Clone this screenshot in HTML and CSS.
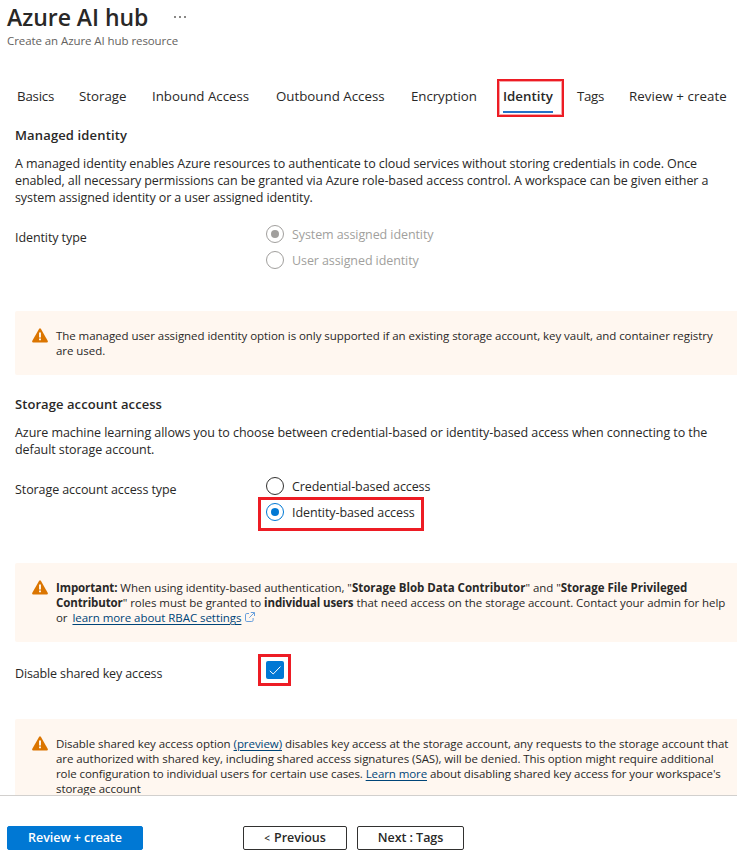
FILE: index.html
```html
<!DOCTYPE html>
<html lang="en">
<head>
<meta charset="utf-8">
<title>Azure AI hub</title>
<link rel="stylesheet" href="styles.css">
</head>
<body>
<svg class="defs" aria-hidden="true">
  <symbol id="warning" viewBox="0 0 16 15">
    <path d="M7 .9Q8-.5 9 .9L15.8 13Q16.2 14.5 14.8 14.5H1.2Q-.2 14.5.2 13Z" fill="#db7500"/>
    <path d="M7.1 4.5h1.8v5H7.1zM7.1 10.6h1.8v1.7H7.1z" fill="#fff"/>
  </symbol>
</svg>
<div class="blade">
  <header class="head">
    <h1>Azure AI hub</h1>
    <span class="more"><i></i><i></i><i></i></span>
  </header>
  <p class="subtitle">Create an Azure AI hub resource</p>
  <nav class="tabs">
    <a class="t1">Basics</a><a class="t2">Storage</a><a class="t3">Inbound Access</a><a class="t4">Outbound Access</a><a class="t5">Encryption</a><a class="active"><span>Identity</span></a><a class="t7">Tags</a><a class="t8">Review + create</a>
  </nav>
  <main>
    <h2>Managed identity</h2>
    <p class="text">A managed identity enables Azure resources to authenticate to cloud services without storing credentials in code. Once<br>enabled, all necessary permissions can be granted via Azure role-based access control. A workspace can be given either a<br>system assigned identity or a user assigned identity.</p>
    <div class="field disabled">
      <span class="label">Identity type</span>
      <div class="options">
        <label class="option"><span class="radio on"></span>System assigned identity</label>
        <label class="option"><span class="radio"></span>User assigned identity</label>
      </div>
    </div>
    <section class="alert short">
      <svg class="warn"><use href="#warning"/></svg>
      <p>The managed user assigned identity option is only supported if an existing storage account, key vault, and container registry<br>are used.</p>
    </section>
    <h2 class="second">Storage account access</h2>
    <p class="text wide">Azure machine learning allows you to choose between credential-based or identity-based access when connecting to the<br>default storage account.</p>
    <div class="field">
      <span class="label">Storage account access type</span>
      <div class="options">
        <label class="option"><span class="radio"></span>Credential-based access</label>
        <label class="option marked"><span class="radio on"></span>Identity-based access</label>
      </div>
    </div>
    <section class="alert medium">
      <svg class="warn"><use href="#warning"/></svg>
      <p><b>Important:</b> When using identity-based authentication, "<b class="role">Storage Blob Data Contributor</b>" and "<b class="role">Storage File Privileged</b><br><b>Contributor</b>" roles must be granted to <b>individual users</b> that need access on the storage account. Contact your admin for help<br>or <a class="learn">learn more about RBAC settings</a><svg class="ext" viewBox="0 0 10 10"><path d="M4 1.5H1.8Q.5 1.5.5 2.8v5.4Q.5 9.500 1.800 9.500h5Q8.100 9.500 8.100 8.200V6M5.800.5H9.500V4M9.300.7 4.300 5.700"/></svg></p>
    </section>
    <div class="field">
      <span class="label">Disable shared key access</span>
      <span class="check"><svg viewBox="0 0 18 18"><path d="M3.800 9.800 7.200 13 14.500 5.500"/></svg></span>
    </div>
    <section class="alert tall">
      <svg class="warn"><use href="#warning"/></svg>
      <p>Disable shared key access option <a>(preview)</a> disables key access at the storage account, any requests to the storage account that<br>are authorized with shared key, including shared access signatures (SAS), will be denied. This option might require additional<br><span class="tight">role configuration to individual users for certain use cases. <a>Learn more</a> about disabling shared key access for your workspace's</span><br>storage account</p>
    </section>
  </main>
</div>
<footer>
  <button class="primary">Review + create</button>
  <button class="prev"><small>&lt;</small> Previous</button>
  <button class="next">Next : Tags</button>
</footer>
</body>
</html>
```
FILE: styles.css
```css
*, *::before, *::after { box-sizing: border-box; }
body { margin: 0; height: 859px; overflow: hidden; background: #fff; color: #292827; font: 12.5px/17px "Open Sans", sans-serif; letter-spacing: -0.088px; }
h1, h2, p { margin: 0; }
.defs { position: absolute; width: 0; height: 0; }
.blade { height: 795px; overflow: hidden; }
.head { display: flex; align-items: center; height: 33px; padding-left: 7px; }
h1 { width: 167px; font-size: 23px; line-height: 32px; font-weight: 600; letter-spacing: -0.03px; }
.more { display: flex; gap: 3px; }
.more i { width: 2px; height: 2px; background: #8a8886; }
.subtitle { padding-left: 7px; font-size: 11.5px; line-height: 16px; color: #646260; letter-spacing: -0.08px; }
.tabs { display: grid; grid-template-columns: 62px 73px 124px 135px 92px 74px 52px auto; height: 38px; margin: 30px 0 0 17px; font-size: 13.300px; line-height: 35px; letter-spacing: 0; white-space: nowrap; }
.t1 { letter-spacing: -0.2px; }
.t5 { letter-spacing: -0.06px; }
.t7 { letter-spacing: -0.3px; }
.t8 { letter-spacing: 0.06px; }
.active { position: relative; font-weight: 600; }
.active span { display: block; width: 50px; height: 34px; border-bottom: 2px solid #2472c8; }
.active::after { content: ""; position: absolute; left: -6px; top: 0; width: 67px; height: 38px; border: 2px solid #ed1c24; box-shadow: inset 0 0 0 1px #f8a5a8; }
main { padding-left: 15px; }
h2 { margin-top: 10px; font-size: 13px; line-height: 17px; font-weight: 600; letter-spacing: 0.14px; }
h2.second { margin-top: 21px; letter-spacing: 0.07px; }
.text { margin-top: 11px; white-space: nowrap; }
.text.wide { letter-spacing: -0.065px; }
.field { display: flex; margin-top: 19px; height: 44px; }
.label { width: 251px; padding-top: 4px; }
.options { display: flex; flex-direction: column; gap: 8px; align-items: flex-start; }
.option { position: relative; display: flex; align-items: center; gap: 8px; height: 18px; }
.radio { display: grid; place-items: center; width: 18px; height: 18px; border: 1px solid #323130; border-radius: 50%; }
.radio.on { border-color: #0078d4; }
.radio.on::after { content: ""; width: 8px; height: 8px; border-radius: 50%; background: #0078d4; }
.disabled .option { color: #a19f9d; }
.disabled .radio { border-color: #a19f9d; }
.disabled .radio::after { background: #a19f9d; }
.marked::after { content: ""; position: absolute; left: -8px; top: -6px; width: 166px; height: 34px; border: 3px solid #ed1c24; }
.alert { display: flex; margin-top: 42px; padding: 17px 0 0 17px; background: #fff7f0; border-radius: 2px 0 0 2px; font-size: 11.5px; line-height: 15px; letter-spacing: -0.052px; white-space: nowrap; }
.alert.short { height: 64px; }
.alert.medium { height: 79px; }
.alert.tall { height: 96px; margin-top: 40px; letter-spacing: -0.062px; }
.alert .tight { letter-spacing: -0.095px; }
.alert b { font-weight: 700; letter-spacing: -0.11px; }
.alert .role { letter-spacing: -0.01px; }
.warn { flex: none; width: 16px; height: 15px; margin-right: 8px; }
.alert a { color: #004578; text-decoration: underline; text-underline-offset: 2px; }
.alert .learn { margin-left: 2px; }
.ext { width: 10px; height: 10px; margin-left: 4px; fill: none; stroke: #6aa0dc; stroke-width: 1; }
.medium + .field { height: 18px; letter-spacing: -0.14px; white-space: nowrap; }
.check { position: relative; width: 18px; height: 18px; border-radius: 2px; background: #0078d4; }
.check svg { display: block; fill: none; stroke: #fff; }
.check::after { content: ""; position: absolute; left: -8px; top: -7px; width: 33px; height: 32px; border: 3px solid #ed1c24; }
footer { display: flex; height: 64px; padding: 30px 0 0 7px; border-top: 1px solid #d2d0ce; }
button { height: 24px; padding: 0; border: 1px solid #323130; border-radius: 2px; background: #fff; color: #292827; font: 600 12.5px/20px "Open Sans", sans-serif; letter-spacing: -0.05px; }
.primary { width: 136px; border-color: #0078d4; background: #0078d4; color: #fff; }
.prev { width: 104px; margin-left: 100px; word-spacing: 1px; }
.prev small { font-size: 10px; }
.next { width: 107px; margin-left: 10px; }
```
